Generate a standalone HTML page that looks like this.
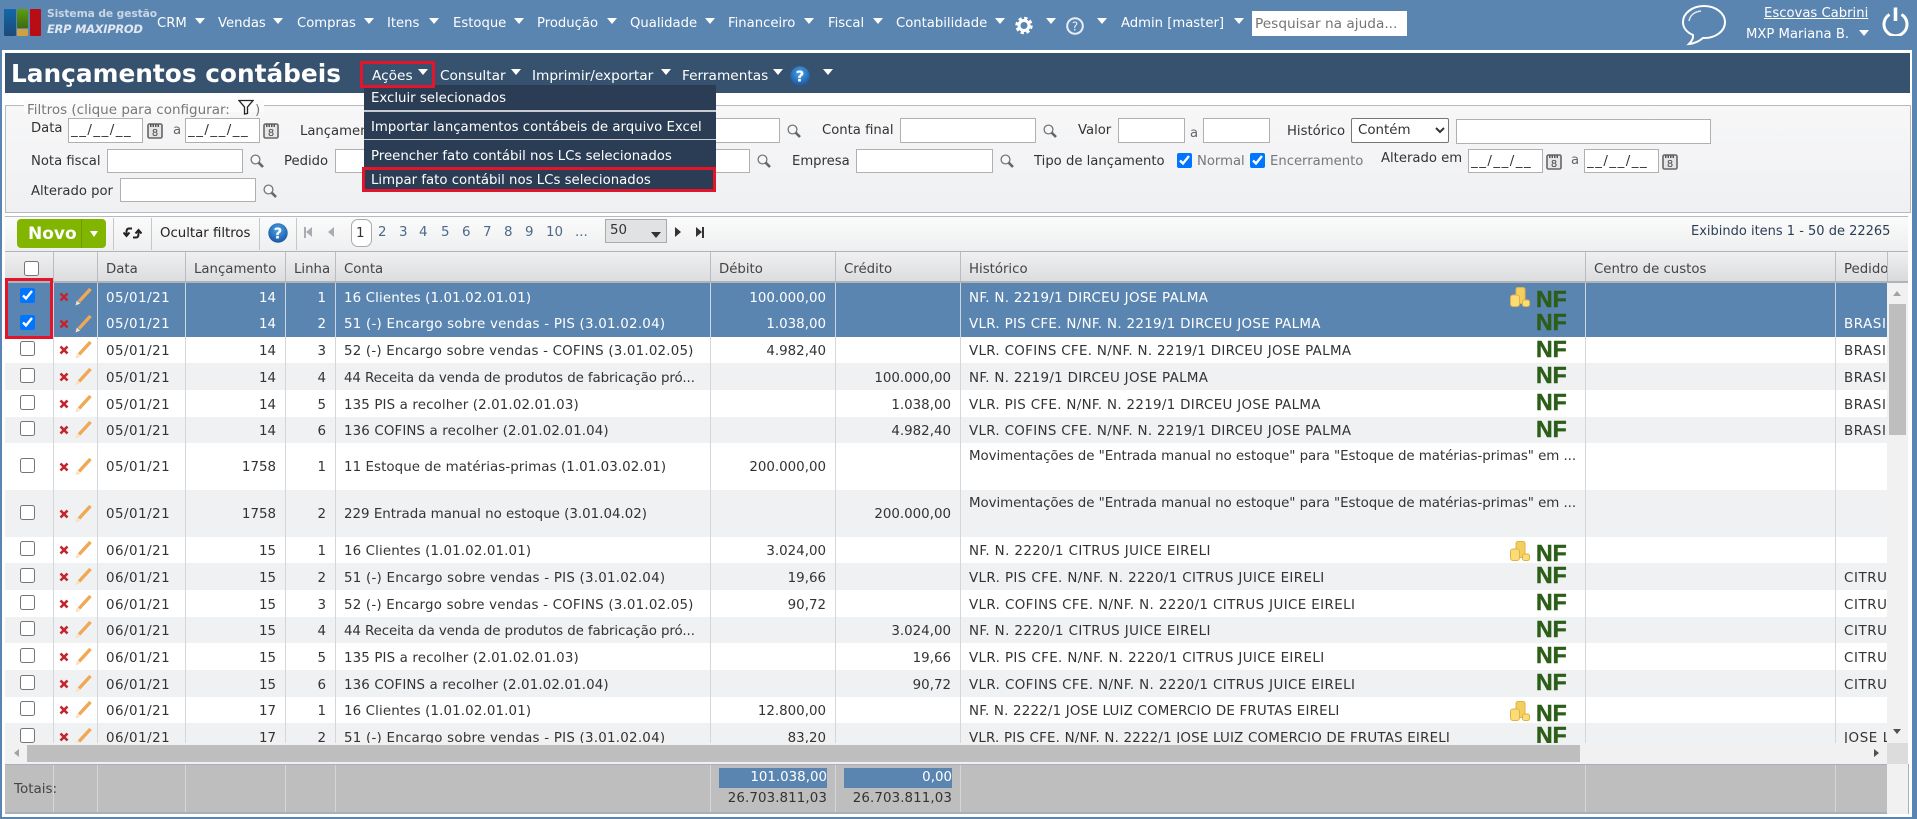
<!DOCTYPE html>
<html lang="pt-BR"><head><meta charset="utf-8"><title>Lançamentos contábeis</title>
<style>
html,body{margin:0;padding:0}
body{width:1917px;height:819px;overflow:hidden;position:relative;background:#5b85b1;font:13px "DejaVu Sans","Liberation Sans",sans-serif;color:#333}
.a,.t,.c,input,select,svg.i{position:absolute}
.t{white-space:nowrap;line-height:18px}
.w{color:#fff}
.c{width:0;height:0;border-left:5px solid transparent;border-right:5px solid transparent;border-top:6px solid #fff}
input[type=text]{box-sizing:border-box;border:1px solid #b0b0b0;background:#fff;margin:0;padding:0 2px;font:14px "DejaVu Sans",sans-serif;color:#333;outline:0;border-radius:0}
input.dt{letter-spacing:1.5px;font-size:13.4px!important}
input::placeholder{color:#757575;opacity:1}
input[type=checkbox]{margin:0;width:15px;height:15px}
.red{position:absolute;box-sizing:border-box;border:3px solid #e4142a;z-index:30}
table.g{position:absolute;left:0;top:0;table-layout:fixed;border-collapse:separate;border-spacing:0;width:1883px}
table.g td{padding:4px 0 0;border-right:1px solid #d4d6d9;white-space:nowrap;overflow:hidden;position:relative;font-size:13.4px;line-height:18px;vertical-align:middle;color:#333}
table.hd td{padding-top:2px}
td.l{padding-left:8px!important}td.n{text-align:right;padding-right:9px!important}
tr.s td{background:#5b85b1;color:#fff;border-right-color:#cdd5de}
tr.s2 td{padding-top:2px}
tr.g2 td{background:#f0f1f3}
tr.g1 td{background:#fff}
tr.tl td{padding-top:2px}
tr.tl td.h{vertical-align:top;padding-top:5px}
.g:not(.hd) td:last-child{letter-spacing:.6px}
td.d{letter-spacing:.5px}
td.c1{letter-spacing:.13px}td.c2{letter-spacing:.24px}td.c3{letter-spacing:.2px}td.c4{letter-spacing:-.1px}td.c7{letter-spacing:.07px}
td.h1{letter-spacing:.33px}td.h2{letter-spacing:.4px}td.h3{letter-spacing:.2px}td.h4{letter-spacing:-.06px}
td input{position:absolute;left:15px;top:calc(50% - 9px)}
td svg.x{position:absolute;left:5px;top:calc(50% - 5px);width:10px;height:10px}
td svg.p{position:absolute;left:20px;top:calc(50% - 9px);width:18px;height:18px}
td svg.k{position:absolute;left:549px;top:3px;width:20px;height:20px}
td b.nf{position:absolute;left:575px;top:3px;font:bold 23px/18px "Liberation Sans",sans-serif;letter-spacing:0;color:#2b5e17;-webkit-text-stroke:.5px #2b5e17}
tr.co td svg.k{top:4px}tr.co td b.nf{top:7px}
.hd td{height:31px;font-size:13.3px!important;color:#444!important;border-right:1px solid #b9bcc0!important;background:linear-gradient(#f0f0f1,#d9dadc)}
.p{top:224px;color:#4b6a8a;font-size:13.4px}
.m{font-size:13.2px;top:15px;color:#fff}
.mm{font-size:13.7px;top:67px;color:#fff}
.dd{font-size:13.3px;color:#fff;left:371px}
.lb{font-size:13.2px;color:#333}
.v{font-size:13.4px;color:#333}
</style></head><body>
<svg width="0" height="0" style="position:absolute"><defs>
<symbol id="x" viewBox="0 0 10 10"><path d="M1.5 1.5L8.5 8.5M8.5 1.5L1.5 8.5" stroke="#c3252c" stroke-width="2.6" fill="none"/></symbol>
<symbol id="pn" viewBox="0 0 18 18"><path d="M5 13.5L16.5 1" stroke="#f0a854" stroke-width="3.4" fill="none"/><path d="M1.5 17.5L2.8 12.5L6.3 15.5Z" fill="#f5e2c6"/></symbol>
<symbol id="cn" viewBox="0 0 20 20"><rect x="6" y="0.5" width="9" height="16" rx="2" fill="#f4cf5e" stroke="#e2b04a"/><rect x="0.5" y="8" width="9" height="11.5" rx="2.5" fill="#fbdd78" stroke="#e2b04a"/><rect x="12.5" y="13" width="7" height="6.5" rx="2" fill="#fbdd78" stroke="#e2b04a"/></symbol>
<symbol id="cal" viewBox="0 0 16 17"><rect x="1" y="2" width="14" height="14" rx="1.5" fill="#e6e6e6" stroke="#666" stroke-width="1.6"/><path d="M3 3.5h10" stroke="#555" stroke-width="3" stroke-dasharray="1.5 1"/><text x="8" y="14" font-family="DejaVu Sans" font-size="10" text-anchor="middle" fill="#444">8</text></symbol>
<symbol id="s" viewBox="0 0 14 14"><circle cx="5.5" cy="5.5" r="4.4" fill="#f6f8fa" stroke="#777" stroke-width="1.3"/><path d="M8.8 8.8L13 13" stroke="#666" stroke-width="2.6"/></symbol>
<symbol id="q" viewBox="0 0 20 20"><defs><radialGradient id="qg" cx=".5" cy=".35" r=".7"><stop offset="0" stop-color="#4aa6ea"/><stop offset="1" stop-color="#17509c"/></radialGradient></defs><circle cx="10" cy="10" r="9.7" fill="url(#qg)"/><text x="10" y="15.5" font-family="DejaVu Sans" font-weight="bold" font-size="15" text-anchor="middle" fill="#fff">?</text></symbol>
</defs></svg>

<!-- logo -->
<div class="a" style="left:4px;top:9px;width:12px;height:27px;background:linear-gradient(#1467a8,#1c4a78);border-radius:1px"></div>
<div class="a" style="left:17px;top:9px;width:11px;height:19px;background:linear-gradient(#5f9e10,#3d6a14);border-radius:1px"></div>
<div class="a" style="left:17px;top:29px;width:11px;height:7px;background:#d2a13f;border-radius:1px"></div>
<div class="a" style="left:30px;top:9px;width:11px;height:27px;background:#b90d16;border-radius:1px"></div>
<span class="t" style="left:47px;top:5px;font-size:10.7px;font-weight:bold;color:#c9d6e4;letter-spacing:-.1px">Sistema de gestão</span>
<span class="t" style="left:47px;top:20px;font-size:11.5px;font-weight:bold;font-style:italic;color:#dfe7f0;letter-spacing:-.3px">ERP MAXIPROD</span>

<!-- top menu -->
<span class="t m" style="left:157px">CRM</span><i class="c" style="left:195px;top:18px"></i>
<span class="t m" style="left:218px">Vendas</span><i class="c" style="left:273px;top:18px"></i>
<span class="t m" style="left:297px">Compras</span><i class="c" style="left:364px;top:18px"></i>
<span class="t m" style="left:387px">Itens</span><i class="c" style="left:429px;top:18px"></i>
<span class="t m" style="left:453px">Estoque</span><i class="c" style="left:514px;top:18px"></i>
<span class="t m" style="left:537px">Produção</span><i class="c" style="left:607px;top:18px"></i>
<span class="t m" style="left:630px">Qualidade</span><i class="c" style="left:705px;top:18px"></i>
<span class="t m" style="left:728px">Financeiro</span><i class="c" style="left:804px;top:18px"></i>
<span class="t m" style="left:828px">Fiscal</span><i class="c" style="left:873px;top:18px"></i>
<span class="t m" style="left:896px">Contabilidade</span><i class="c" style="left:995px;top:18px"></i>
<svg class="i" style="left:1014px;top:16px" width="20" height="19" viewBox="0 0 20 19"><circle cx="10" cy="9.5" r="5" fill="none" stroke="#fff" stroke-width="3"/><circle cx="10" cy="9.5" r="7.2" fill="none" stroke="#fff" stroke-width="3" stroke-dasharray="3.2 2.45"/></svg>
<i class="c" style="left:1046px;top:18px;border-left-width:5.5px;border-right-width:5.5px"></i>
<svg class="i" style="left:1066px;top:17px" width="18" height="18" viewBox="0 0 18 18"><circle cx="9" cy="9" r="7.8" fill="none" stroke="#e8eef5" stroke-width="2"/><text x="9" y="13.5" font-family="DejaVu Sans" font-size="12" text-anchor="middle" fill="#e8eef5">?</text></svg>
<i class="c" style="left:1097px;top:18px;border-left-width:5.5px;border-right-width:5.5px"></i>
<span class="t m" style="left:1121px">Admin [master]</span><i class="c" style="left:1234px;top:18px;border-left-width:5.5px;border-right-width:5.5px"></i>
<input type="text" placeholder="Pesquisar na ajuda..." style="left:1252px;top:11px;width:155px;height:25px;border:0;font-size:13.7px;padding-left:3px">

<svg class="i" style="left:1681px;top:4px" width="46" height="42" viewBox="0 0 46 42"><path d="M23 2C11 2 2 9.500 2 18C2 24 6 28.500 12 31C12.500 34 10.500 37.500 8 40C13 39.500 18.500 37 22 34C34 34.500 44 27.500 44 18C44 9.500 35 2 23 2Z" fill="none" stroke="#fff" stroke-width="2"/><path d="M8 17C9 11 14 7.500 20 7" fill="none" stroke="#dfe8f1" stroke-width="1.5"/></svg>
<span class="t w" style="left:1764px;top:5px;font-size:13.2px;text-decoration:underline">Escovas Cabrini</span>
<span class="t w" style="left:1746px;top:26px;font-size:13.2px">MXP Mariana B.</span><i class="c" style="left:1859px;top:30px"></i>
<svg class="i" style="left:1881px;top:6px" width="29" height="30" viewBox="0 0 29 30"><path d="M8.500 8.500A11.500 11.500 0 1 0 20.500 8.500" fill="none" stroke="#fff" stroke-width="3"/><path d="M14.500 1.500V15" stroke="#fff" stroke-width="3.600"/></svg>

<!-- main container -->
<div class="a" style="left:2px;top:50px;width:1910px;height:767px;background:#fff"></div>
<div class="a" style="left:5px;top:53px;width:1905px;height:40px;background:#36526f"></div>
<span class="t w" style="left:11px;top:61px;font-size:24.8px;line-height:26px;font-weight:bold">Lançamentos contábeis</span>
<span class="t mm" style="left:372px">Ações</span><i class="c" style="left:418px;top:69px"></i>
<span class="t mm" style="left:440px">Consultar</span><i class="c" style="left:511px;top:69px"></i>
<span class="t mm" style="left:532px">Imprimir/exportar</span><i class="c" style="left:661px;top:69px"></i>
<span class="t mm" style="left:682px">Ferramentas</span><i class="c" style="left:773px;top:69px"></i>
<svg class="i" style="left:790px;top:66px" width="20" height="20"><use href="#q"/></svg><i class="c" style="left:823px;top:69px"></i>

<!-- filters -->
<div class="a" style="left:5px;top:105px;width:1904px;height:106px;border:1px solid #b5bac0;background:linear-gradient(#f7f7f8,#eff0f2)"></div>
<div class="a" style="left:24px;top:100px;width:240px;height:12px;background:#fbfbfb"></div>
<span class="t" style="left:27px;top:101px;color:#777;font-size:13.5px">Filtros (clique para configurar:</span>
<svg class="i" style="left:238px;top:99px" width="16" height="16" viewBox="0 0 16 16"><path d="M1 1.500H15L9.500 8V14.500L6.500 15V8Z" fill="none" stroke="#222" stroke-width="1.300"/></svg>
<span class="t" style="left:255px;top:101px;color:#777;font-size:13.5px">)</span>

<span class="t lb" style="left:31px;top:120px">Data</span>
<input class="dt" type="text" value="__/__/__" style="left:68px;top:118px;width:75px;height:25px">
<svg class="i" style="left:147px;top:122px" width="16" height="17"><use href="#cal"/></svg>
<span class="t lb" style="left:173px;top:122px;color:#666">a</span>
<input class="dt" type="text" value="__/__/__" style="left:185px;top:118px;width:75px;height:25px">
<svg class="i" style="left:263px;top:122px" width="16" height="17"><use href="#cal"/></svg>
<span class="t lb" style="left:300px;top:123px">Lançamento</span>
<input type="text" style="left:620px;top:118px;width:160px;height:25px">
<svg class="i" style="left:787px;top:124px" width="14" height="14"><use href="#s"/></svg>
<span class="t lb" style="left:822px;top:122px">Conta final</span>
<input type="text" style="left:900px;top:118px;width:136px;height:25px">
<svg class="i" style="left:1043px;top:124px" width="14" height="14"><use href="#s"/></svg>
<span class="t lb" style="left:1078px;top:122px">Valor</span>
<input type="text" style="left:1118px;top:118px;width:67px;height:25px">
<span class="t lb" style="left:1190px;top:125px;color:#666">a</span>
<input type="text" style="left:1203px;top:118px;width:67px;height:25px">
<span class="t lb" style="left:1287px;top:123px">Histórico</span>
<select style="left:1351px;top:118px;width:98px;height:25px;font:400 13.4px 'DejaVu Sans',sans-serif;background:#fff;color:#333;border:1px solid #767676;border-radius:2px;padding-left:2px"><option>Contém</option></select>
<input type="text" style="left:1456px;top:119px;width:255px;height:25px">

<span class="t lb" style="left:31px;top:153px">Nota fiscal</span>
<input type="text" style="left:107px;top:149px;width:136px;height:24px">
<svg class="i" style="left:250px;top:154px" width="14" height="14"><use href="#s"/></svg>
<span class="t lb" style="left:284px;top:153px">Pedido</span>
<input type="text" style="left:335px;top:149px;width:415px;height:24px">
<svg class="i" style="left:757px;top:154px" width="14" height="14"><use href="#s"/></svg>
<span class="t lb" style="left:792px;top:153px">Empresa</span>
<input type="text" style="left:856px;top:149px;width:137px;height:24px">
<svg class="i" style="left:1000px;top:154px" width="14" height="14"><use href="#s"/></svg>
<span class="t lb" style="left:1034px;top:153px">Tipo de lançamento</span>
<input type="checkbox" checked style="left:1177px;top:153px">
<span class="t lb" style="left:1197px;top:153px;color:#777">Normal</span>
<input type="checkbox" checked style="left:1250px;top:153px">
<span class="t lb" style="left:1270px;top:153px;color:#777">Encerramento</span>
<span class="t lb" style="left:1381px;top:150px">Alterado em</span>
<input class="dt" type="text" value="__/__/__" style="left:1468px;top:149px;width:75px;height:24px">
<svg class="i" style="left:1546px;top:153px" width="16" height="17"><use href="#cal"/></svg>
<span class="t lb" style="left:1571px;top:152px;color:#666">a</span>
<input class="dt" type="text" value="__/__/__" style="left:1584px;top:149px;width:75px;height:24px">
<svg class="i" style="left:1662px;top:153px" width="16" height="17"><use href="#cal"/></svg>
<span class="t lb" style="left:31px;top:183px">Alterado por</span>
<input type="text" style="left:120px;top:178px;width:136px;height:24px">
<svg class="i" style="left:263px;top:184px" width="14" height="14"><use href="#s"/></svg>

<!-- toolbar -->
<div class="a" style="left:5px;top:216px;width:1903px;height:35px;background:linear-gradient(#fbfbfb,#eeeff0);border-top:1px solid #b5bac0;box-sizing:border-box"></div>
<div class="a" style="left:17px;top:219px;width:89px;height:29px;background:#82b500;border-radius:4px"></div>
<div class="a" style="left:81px;top:219px;width:1px;height:29px;background:#6d9a00"></div>
<span class="t w" style="left:28px;top:224px;font-size:17px;line-height:20px;font-weight:bold">Novo</span>
<i class="c" style="left:90px;top:231px;border-left-width:4px;border-right-width:4px"></i>
<div class="a" style="left:113px;top:218px;width:1px;height:32px;background:#c5c7ca"></div>
<svg class="i" style="left:123px;top:226px" width="19" height="14" viewBox="0 0 19 14"><path d="M9 2.500H6C4 2.500 3.500 4 3.500 6V9M0.500 6.500L3.500 10L6.500 6.500M10 11.500H13C15 11.500 15.500 10 15.500 8V5M12.500 7.500L15.500 4L18.500 7.500" fill="none" stroke="#222" stroke-width="2"/></svg>
<div class="a" style="left:151px;top:218px;width:1px;height:32px;background:#c5c7ca"></div>
<span class="t" style="left:160px;top:225px;font-size:13.3px;color:#222">Ocultar filtros</span>
<div class="a" style="left:259px;top:218px;width:1px;height:32px;background:#c5c7ca"></div>
<svg class="i" style="left:268px;top:223px" width="20" height="20"><use href="#q"/></svg>
<div class="a" style="left:296px;top:218px;width:1px;height:32px;background:#c5c7ca"></div>
<div class="a" style="left:304px;top:227px;width:2px;height:11px;background:#a9adb2"></div>
<i class="c" style="left:306px;top:227px;border:0;border-top:5.500px solid transparent;border-bottom:5.500px solid transparent;border-right:6px solid #a9adb2"></i>
<i class="c" style="left:328px;top:227px;border:0;border-top:5.500px solid transparent;border-bottom:5.500px solid transparent;border-right:6px solid #a9adb2"></i>
<div class="a" style="left:351px;top:219px;width:21px;height:28px;box-sizing:border-box;background:#fff;border:1px solid #aaa;border-radius:7px"></div>
<span class="t p" style="left:356px;top:225px;color:#333">1</span>
<span class="t p" style="left:378px">2</span><span class="t p" style="left:399px">3</span><span class="t p" style="left:419px">4</span><span class="t p" style="left:441px">5</span><span class="t p" style="left:462px">6</span><span class="t p" style="left:483px">7</span><span class="t p" style="left:504px">8</span><span class="t p" style="left:525px">9</span><span class="t p" style="left:546px">10</span><span class="t p" style="left:575px">...</span>
<div class="a" style="left:605px;top:219px;width:62px;height:24px;box-sizing:border-box;background:#e1e2e4;border:1px solid #aaa"></div>
<span class="t" style="left:610px;top:222px;font-size:13.4px;color:#333">50</span>
<i class="c" style="left:651px;top:232px;border-top-color:#333"></i>
<i class="c" style="left:675px;top:227px;border:0;border-top:5.500px solid transparent;border-bottom:5.500px solid transparent;border-left:6px solid #333"></i>
<i class="c" style="left:696px;top:227px;border:0;border-top:5.500px solid transparent;border-bottom:5.500px solid transparent;border-left:6px solid #333"></i>
<div class="a" style="left:702px;top:227px;width:2px;height:11px;background:#333"></div>
<span class="t" style="left:1691px;top:223px;font-size:13px;color:#2c3e55">Exibindo itens 1 - 50 de 22265</span>

<!-- header -->
<div class="a" style="left:5px;top:251px;width:1903px;height:32px;overflow:hidden;background:linear-gradient(#f0f0f1,#d9dadc);border-top:1px solid #b0b3b7;border-bottom:2px solid #b0b3b7;box-sizing:border-box">
<table class="g hd"><colgroup><col style="width:49px"><col style="width:44px"><col style="width:88px"><col style="width:100px"><col style="width:50px"><col style="width:375px"><col style="width:125px"><col style="width:125px"><col style="width:625px"><col style="width:250px"><col style="width:52px"></colgroup>
<tr><td><input type="checkbox" style="left:19px;top:calc(50% - 8px)"></td><td></td><td class="l">Data</td><td class="l">Lançamento</td><td class="l">Linha</td><td class="l">Conta</td><td class="l">Débito</td><td class="l">Crédito</td><td class="l">Histórico</td><td class="l">Centro de custos</td><td class="l">Pedido</td></tr></table></div>

<!-- rows -->
<div class="a" style="left:5px;top:283px;width:1882px;height:460px;overflow:hidden">
<table class="g"><colgroup><col style="width:49px"><col style="width:44px"><col style="width:88px"><col style="width:100px"><col style="width:50px"><col style="width:375px"><col style="width:125px"><col style="width:125px"><col style="width:625px"><col style="width:250px"><col style="width:52px"></colgroup>
<tr class="s co" style="height:27px"><td><input type="checkbox" checked></td><td><svg class="x"><use href="#x"/></svg><svg class="p"><use href="#pn"/></svg></td><td class="l d">05/01/21</td><td class="n">14</td><td class="n">1</td><td class="l c1">16 Clientes (1.01.02.01.01)</td><td class="n">100.000,00</td><td class="n"></td><td class="l h h1">NF. N. 2219/1 DIRCEU JOSE PALMA<svg class="k"><use href="#cn"/></svg><b class="nf">NF</b></td><td></td><td class="l"></td></tr>
<tr class="s s2" style="height:27px"><td><input type="checkbox" checked></td><td><svg class="x"><use href="#x"/></svg><svg class="p"><use href="#pn"/></svg></td><td class="l d">05/01/21</td><td class="n">14</td><td class="n">2</td><td class="l c2">51 (-) Encargo sobre vendas - PIS (3.01.02.04)</td><td class="n">1.038,00</td><td class="n"></td><td class="l h h1">VLR. PIS CFE. N/NF. N. 2219/1 DIRCEU JOSE PALMA<b class="nf">NF</b></td><td></td><td class="l">BRASIL</td></tr>
<tr class="g1" style="height:26px"><td><input type="checkbox"></td><td><svg class="x"><use href="#x"/></svg><svg class="p"><use href="#pn"/></svg></td><td class="l d">05/01/21</td><td class="n">14</td><td class="n">3</td><td class="l c3">52 (-) Encargo sobre vendas - COFINS (3.01.02.05)</td><td class="n">4.982,40</td><td class="n"></td><td class="l h h1">VLR. COFINS CFE. N/NF. N. 2219/1 DIRCEU JOSE PALMA<b class="nf">NF</b></td><td></td><td class="l">BRASIL</td></tr>
<tr class="g2" style="height:27px"><td><input type="checkbox"></td><td><svg class="x"><use href="#x"/></svg><svg class="p"><use href="#pn"/></svg></td><td class="l d">05/01/21</td><td class="n">14</td><td class="n">4</td><td class="l c4">44 Receita da venda de produtos de fabricação pró...</td><td class="n"></td><td class="n">100.000,00</td><td class="l h h1">NF. N. 2219/1 DIRCEU JOSE PALMA<b class="nf">NF</b></td><td></td><td class="l">BRASIL</td></tr>
<tr class="g1" style="height:27px"><td><input type="checkbox"></td><td><svg class="x"><use href="#x"/></svg><svg class="p"><use href="#pn"/></svg></td><td class="l d">05/01/21</td><td class="n">14</td><td class="n">5</td><td class="l c1">135 PIS a recolher (2.01.02.01.03)</td><td class="n"></td><td class="n">1.038,00</td><td class="l h h1">VLR. PIS CFE. N/NF. N. 2219/1 DIRCEU JOSE PALMA<b class="nf">NF</b></td><td></td><td class="l">BRASIL</td></tr>
<tr class="g2" style="height:26px"><td><input type="checkbox"></td><td><svg class="x"><use href="#x"/></svg><svg class="p"><use href="#pn"/></svg></td><td class="l d">05/01/21</td><td class="n">14</td><td class="n">6</td><td class="l c1">136 COFINS a recolher (2.01.02.01.04)</td><td class="n"></td><td class="n">4.982,40</td><td class="l h h1">VLR. COFINS CFE. N/NF. N. 2219/1 DIRCEU JOSE PALMA<b class="nf">NF</b></td><td></td><td class="l">BRASIL</td></tr>
<tr class="g1 tl" style="height:47px"><td><input type="checkbox"></td><td><svg class="x"><use href="#x"/></svg><svg class="p"><use href="#pn"/></svg></td><td class="l d">05/01/21</td><td class="n">1758</td><td class="n">1</td><td class="l c7">11 Estoque de matérias-primas (1.01.03.02.01)</td><td class="n">200.000,00</td><td class="n"></td><td class="l h h4">Movimentações de "Entrada manual no estoque" para "Estoque de matérias-primas" em ...</td><td></td><td class="l"></td></tr>
<tr class="g2 tl" style="height:47px"><td><input type="checkbox"></td><td><svg class="x"><use href="#x"/></svg><svg class="p"><use href="#pn"/></svg></td><td class="l d">05/01/21</td><td class="n">1758</td><td class="n">2</td><td class="l">229 Entrada manual no estoque (3.01.04.02)</td><td class="n"></td><td class="n">200.000,00</td><td class="l h h4">Movimentações de "Entrada manual no estoque" para "Estoque de matérias-primas" em ...</td><td></td><td class="l"></td></tr>
<tr class="g1 co" style="height:26px"><td><input type="checkbox"></td><td><svg class="x"><use href="#x"/></svg><svg class="p"><use href="#pn"/></svg></td><td class="l d">06/01/21</td><td class="n">15</td><td class="n">1</td><td class="l c1">16 Clientes (1.01.02.01.01)</td><td class="n">3.024,00</td><td class="n"></td><td class="l h h2">NF. N. 2220/1 CITRUS JUICE EIRELI<svg class="k"><use href="#cn"/></svg><b class="nf">NF</b></td><td></td><td class="l"></td></tr>
<tr class="g2" style="height:27px"><td><input type="checkbox"></td><td><svg class="x"><use href="#x"/></svg><svg class="p"><use href="#pn"/></svg></td><td class="l d">06/01/21</td><td class="n">15</td><td class="n">2</td><td class="l c2">51 (-) Encargo sobre vendas - PIS (3.01.02.04)</td><td class="n">19,66</td><td class="n"></td><td class="l h h2">VLR. PIS CFE. N/NF. N. 2220/1 CITRUS JUICE EIRELI<b class="nf">NF</b></td><td></td><td class="l">CITRUS</td></tr>
<tr class="g1" style="height:27px"><td><input type="checkbox"></td><td><svg class="x"><use href="#x"/></svg><svg class="p"><use href="#pn"/></svg></td><td class="l d">06/01/21</td><td class="n">15</td><td class="n">3</td><td class="l c3">52 (-) Encargo sobre vendas - COFINS (3.01.02.05)</td><td class="n">90,72</td><td class="n"></td><td class="l h h2">VLR. COFINS CFE. N/NF. N. 2220/1 CITRUS JUICE EIRELI<b class="nf">NF</b></td><td></td><td class="l">CITRUS</td></tr>
<tr class="g2" style="height:26px"><td><input type="checkbox"></td><td><svg class="x"><use href="#x"/></svg><svg class="p"><use href="#pn"/></svg></td><td class="l d">06/01/21</td><td class="n">15</td><td class="n">4</td><td class="l c4">44 Receita da venda de produtos de fabricação pró...</td><td class="n"></td><td class="n">3.024,00</td><td class="l h h2">NF. N. 2220/1 CITRUS JUICE EIRELI<b class="nf">NF</b></td><td></td><td class="l">CITRUS</td></tr>
<tr class="g1" style="height:27px"><td><input type="checkbox"></td><td><svg class="x"><use href="#x"/></svg><svg class="p"><use href="#pn"/></svg></td><td class="l d">06/01/21</td><td class="n">15</td><td class="n">5</td><td class="l c1">135 PIS a recolher (2.01.02.01.03)</td><td class="n"></td><td class="n">19,66</td><td class="l h h2">VLR. PIS CFE. N/NF. N. 2220/1 CITRUS JUICE EIRELI<b class="nf">NF</b></td><td></td><td class="l">CITRUS</td></tr>
<tr class="g2" style="height:27px"><td><input type="checkbox"></td><td><svg class="x"><use href="#x"/></svg><svg class="p"><use href="#pn"/></svg></td><td class="l d">06/01/21</td><td class="n">15</td><td class="n">6</td><td class="l c1">136 COFINS a recolher (2.01.02.01.04)</td><td class="n"></td><td class="n">90,72</td><td class="l h h2">VLR. COFINS CFE. N/NF. N. 2220/1 CITRUS JUICE EIRELI<b class="nf">NF</b></td><td></td><td class="l">CITRUS</td></tr>
<tr class="g1 co" style="height:26px"><td><input type="checkbox"></td><td><svg class="x"><use href="#x"/></svg><svg class="p"><use href="#pn"/></svg></td><td class="l d">06/01/21</td><td class="n">17</td><td class="n">1</td><td class="l c1">16 Clientes (1.01.02.01.01)</td><td class="n">12.800,00</td><td class="n"></td><td class="l h h3">NF. N. 2222/1 JOSE LUIZ COMERCIO DE FRUTAS EIRELI<svg class="k"><use href="#cn"/></svg><b class="nf">NF</b></td><td></td><td class="l"></td></tr>
<tr class="g2" style="height:27px"><td><input type="checkbox"></td><td><svg class="x"><use href="#x"/></svg><svg class="p"><use href="#pn"/></svg></td><td class="l d">06/01/21</td><td class="n">17</td><td class="n">2</td><td class="l c2">51 (-) Encargo sobre vendas - PIS (3.01.02.04)</td><td class="n">83,20</td><td class="n"></td><td class="l h h3">VLR. PIS CFE. N/NF. N. 2222/1 JOSE LUIZ COMERCIO DE FRUTAS EIRELI<b class="nf">NF</b></td><td></td><td class="l">JOSE LUIZ</td></tr>
</table></div>

<!-- vertical scrollbar -->
<div class="a" style="left:1887px;top:283px;width:21px;height:460px;background:#f1f1f1"></div>
<div class="a" style="left:1889px;top:304px;width:17px;height:131px;background:#bebebe"></div>
<i class="c" style="left:1893px;top:291px;border:0;border-left:4.500px solid transparent;border-right:4.500px solid transparent;border-bottom:5px solid #a3a3a3"></i>
<i class="c" style="left:1893px;top:729px;border-left-width:4.500px;border-right-width:4.500px;border-top:5px solid #505050"></i>
<!-- horizontal scrollbar -->
<div class="a" style="left:5px;top:743px;width:1882px;height:21px;background:#f1f1f1"></div>
<div class="a" style="left:27px;top:745px;width:1553px;height:17px;background:#bebebe"></div>
<i class="c" style="left:14px;top:749px;border:0;border-top:4.500px solid transparent;border-bottom:4.500px solid transparent;border-right:5px solid #a3a3a3"></i>
<i class="c" style="left:1874px;top:749px;border:0;border-top:4.500px solid transparent;border-bottom:4.500px solid transparent;border-left:5px solid #505050"></i>
<div class="a" style="left:1887px;top:743px;width:21px;height:21px;background:#dcdcdc"></div>

<!-- footer -->
<div class="a" style="left:1887px;top:764px;width:21px;height:50px;background:#f1f1f1"></div>
<div class="a" style="left:5px;top:764px;width:1882px;height:50px;box-sizing:border-box;background:#bebebe;border-top:1px solid #a9b0bd;border-bottom:2px solid #a9b0bd;overflow:hidden">
<table class="g"><colgroup><col style="width:49px"><col style="width:44px"><col style="width:88px"><col style="width:100px"><col style="width:50px"><col style="width:375px"><col style="width:125px"><col style="width:125px"><col style="width:625px"><col style="width:250px"><col style="width:52px"></colgroup>
<tr style="height:47px"><td></td><td></td><td></td><td></td><td></td><td></td><td></td><td></td><td></td><td></td><td></td></tr></table></div>
<span class="t" style="left:14px;top:780px;font-size:13.5px;color:#444">Totais:</span>
<div class="a" style="left:719px;top:768px;width:108px;height:20px;background:#5b85b1"></div>
<div class="a" style="left:844px;top:768px;width:108px;height:20px;background:#5b85b1"></div>
<span class="t v" style="right:1090px;top:769px;color:#fff">101.038,00</span>
<span class="t v" style="right:965px;top:769px;color:#fff">0,00</span>
<span class="t v" style="right:1090px;top:790px;letter-spacing:.1px">26.703.811,03</span>
<span class="t v" style="right:965px;top:790px;letter-spacing:.1px">26.703.811,03</span>
<div class="a" style="left:1908px;top:764px;width:1px;height:50px;background:#a9b0bd"></div>

<!-- dropdown -->
<div class="a" style="left:364px;top:85px;width:352px;height:106px;background:#2b3d54;z-index:20"></div>
<div class="a" style="left:364px;top:110px;width:352px;height:2px;background:#c8ccd2;z-index:21"></div>
<div class="a" style="left:364px;top:139px;width:352px;height:1px;background:#c8ccd2;z-index:21"></div>
<span class="t dd" style="top:90px;z-index:22">Excluir selecionados</span>
<span class="t dd" style="top:119px;z-index:22">Importar lançamentos contábeis de arquivo Excel</span>
<span class="t dd" style="top:148px;z-index:22">Preencher fato contábil nos LCs selecionados</span>
<span class="t dd" style="top:172px;z-index:22">Limpar fato contábil nos LCs selecionados</span>

<!-- red highlights -->
<div class="red" style="left:360px;top:61px;width:75px;height:27px"></div>
<div class="red" style="left:362px;top:167px;width:354px;height:25px"></div>
<div class="red" style="left:5px;top:278px;width:48px;height:61px"></div>
</body></html>
